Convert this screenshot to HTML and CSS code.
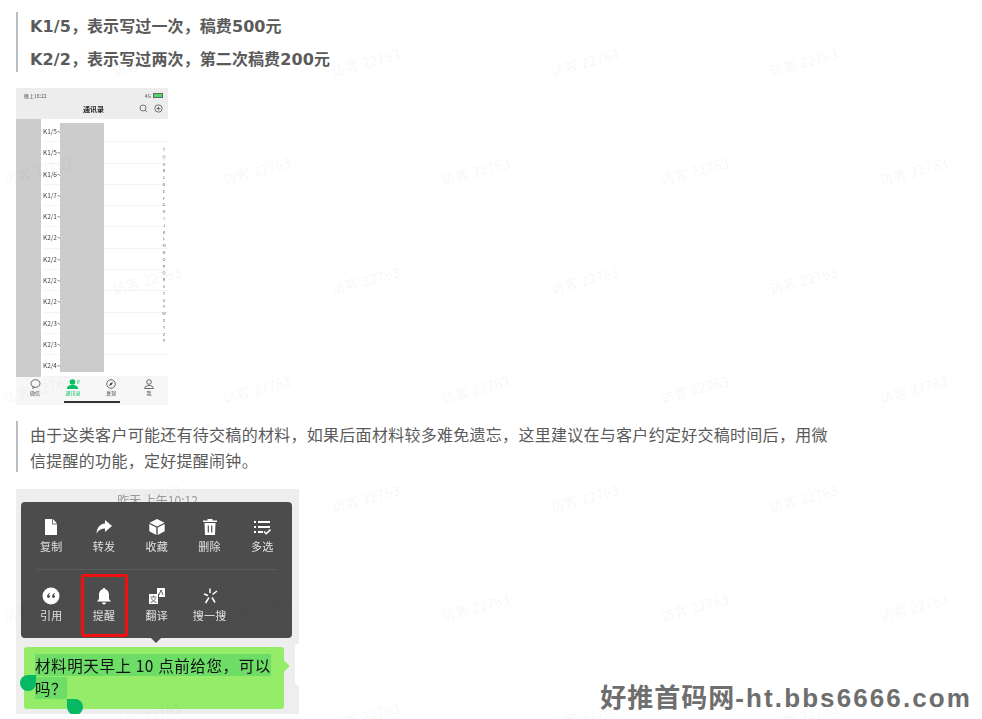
FILE: index.html
```html
<!DOCTYPE html>
<html lang="zh-CN">
<head>
    <meta charset="UTF-8">
    <meta name="viewport" content="width=device-width, initial-scale=1.0">
    <title>好推首码网</title>
    <link rel="stylesheet" href="styles.css">
</head>
<body>
    <main class="article">
        <blockquote class="quote quote-bold">
            <p>K1/5，表示写过一次，稿费500元</p>
            <p>K2/2，表示写过两次，第二次稿费200元</p>
        </blockquote>

        <!-- 通讯录截图 -->
        <div class="phone">
            <div class="phone-head">
                <div class="status">
                    <span>晚上18:22</span>
                    <span class="status-right">4G <i class="battery"></i></span>
                </div>
                <div class="phone-title">
                    <b>通讯录</b>
                    <span class="phone-tools">
                        <svg width="9" height="9" viewBox="0 0 9 9"><circle cx="4" cy="4" r="3" fill="none" stroke="#555" stroke-width=".8"/><path d="M6.2 6.2 8 8" stroke="#555" stroke-width=".8"/></svg>
                        <svg width="9" height="9" viewBox="0 0 9 9"><circle cx="4.5" cy="4.5" r="3.7" fill="none" stroke="#555" stroke-width=".8"/><path d="M4.5 2.5v4M2.5 4.5h4" stroke="#555" stroke-width=".8"/></svg>
                    </span>
                </div>
            </div>
            <div class="phone-body">
                <ul class="contacts">
                    <li>K1/5~</li>
                    <li>K1/5~</li>
                    <li>K1/6~</li>
                    <li>K1/7~</li>
                    <li>K2/1~</li>
                    <li>K2/2~</li>
                    <li>K2/2~</li>
                    <li>K2/2~</li>
                    <li>K2/2~</li>
                    <li>K2/3~</li>
                    <li>K2/3~</li>
                    <li>K2/4~</li>
                </ul>
                <div class="letters">↑<br>☆<br>A<br>B<br>C<br>D<br>E<br>F<br>G<br>H<br>I<br>J<br>K<br>L<br>M<br>N<br>O<br>P<br>Q<br>R<br>S<br>T<br>U<br>V<br>W<br>X<br>Y<br>Z<br>#</div>
                <div class="mask mask-a"></div>
                <div class="mask mask-b"></div>
            </div>
            <div class="tabs">
                <div class="tab">
                    <svg width="11" height="10" viewBox="0 0 11 10"><ellipse cx="5.5" cy="4.5" rx="4.5" ry="3.8" fill="none" stroke="#444" stroke-width=".8"/><path d="M3 7.5 2.6 9.5 5 8.2" fill="none" stroke="#444" stroke-width=".6"/></svg>
                    <span>微信</span>
                </div>
                <div class="tab tab-on">
                    <svg width="13" height="10" viewBox="0 0 13 10"><circle cx="5.5" cy="3" r="2.8" fill="#07c160"/><path d="M0 10c0-3 2-4 5.500-4S11 7 11 10Z" fill="#07c160"/><path d="M10 2h3M10 4h2" stroke="#07c160" stroke-width=".8"/></svg>
                    <span>通讯录</span>
                </div>
                <div class="tab">
                    <svg width="10" height="10" viewBox="0 0 10 10"><circle cx="5" cy="5" r="4.300" fill="none" stroke="#444" stroke-width=".8"/><path d="M7 3 4.200 4.200 3 7l2.800-1.200Z" fill="#444"/></svg>
                    <span>发现</span>
                </div>
                <div class="tab">
                    <svg width="10" height="10" viewBox="0 0 10 10"><circle cx="5" cy="3" r="2.300" fill="none" stroke="#444" stroke-width=".8"/><path d="M.6 9.500c0-2 2-3 4.400-3s4.400 1 4.400 3Z" fill="none" stroke="#444" stroke-width=".8"/></svg>
                    <span>我</span>
                </div>
                <i class="home-bar"></i>
            </div>
        </div>

        <blockquote class="quote quote-plain">
            <p>由于这类客户可能还有待交稿的材料，如果后面材料较多难免遗忘，这里建议在与客户约定好交稿时间后，用微信提醒的功能，定好提醒闹钟。</p>
        </blockquote>

        <!-- 微信长按菜单截图 -->
        <div class="chat">
            <div class="chat-time">昨天 上午10:12</div>
            <div class="bubble">
                <span class="picked">材料明天早上 10 点前给您，可以</span><br>
                <span class="picked">吗？</span>
            </div>
            <i class="next-bubble"></i>
            <i class="handle handle-start"></i>
            <i class="handle handle-end"></i>

            <div class="menu">
                <div class="menu-row">
                    <div class="menu-item">
                        <svg width="18" height="18" viewBox="0 0 18 18"><path d="M3 1h8l4 4.500V17H3Z" fill="#fff"/><path d="M10.500 1v5H15" fill="none" stroke="#4c4c4c" stroke-width=".8"/></svg>
                        <span>复制</span>
                    </div>
                    <div class="menu-item">
                        <svg width="18" height="18" viewBox="0 0 18 18"><path d="M10 2l7 6-7 6v-3.500c-4 0-6.500 1.500-8.500 5C2 10 4.500 6 10 5.500Z" fill="#fff"/></svg>
                        <span>转发</span>
                    </div>
                    <div class="menu-item">
                        <svg width="18" height="18" viewBox="0 0 18 18"><path d="M9 1l7.500 3.800L9 8.500 1.500 4.800Z" fill="#fff"/><path d="M1.300 6l7 3.600V17l-7-3.800ZM16.700 6l-7 3.600V17l7-3.800Z" fill="#fff"/></svg>
                        <span>收藏</span>
                    </div>
                    <div class="menu-item">
                        <svg width="18" height="18" viewBox="0 0 18 18"><path d="M6.500 1h5v1.500H16V4H2V2.500h4.500ZM3.500 5h11L14 17H4Z" fill="#fff"/><path d="M7.300 7.500v7M10.700 7.500v7" stroke="#4c4c4c" stroke-width="1.200"/></svg>
                        <span>删除</span>
                    </div>
                    <div class="menu-item">
                        <svg width="18" height="18" viewBox="0 0 18 18"><path d="M1 4h2M5 4h12M1 9h2M5 9h12M1 14h2M5 14h5" stroke="#fff" stroke-width="1.800" fill="none"/><path d="M11 13.500l2.200 2.200L17.500 11.500" stroke="#fff" stroke-width="1.600" fill="none"/></svg>
                        <span>多选</span>
                    </div>
                </div>
                <hr class="menu-line">
                <div class="menu-row menu-row-last">
                    <div class="menu-item">
                        <svg width="18" height="18" viewBox="0 0 18 18"><circle cx="9" cy="9" r="8.500" fill="#fff"/><path d="M8 6C6 6.500 5 8 5 9.500a1.500 1.500 0 1 0 1.700-1.500c.2-.6.700-1.100 1.300-1.300ZM13 6c-2 .5-3 2-3 3.500a1.500 1.500 0 1 0 1.700-1.500c.2-.6.700-1.100 1.300-1.300Z" fill="#4c4c4c"/></svg>
                        <span>引用</span>
                    </div>
                    <div class="menu-item">
                        <svg width="18" height="18" viewBox="0 0 18 18"><path d="M9 1c.8 0 1.300.5 1.400 1.300C13 3 14 5.500 14 8v4l2 2.500H2L4 12V8c0-2.500 1-5 3.600-5.700C7.700 1.500 8.200 1 9 1Z" fill="#fff"/><path d="M7 15.500h4a2 2 0 0 1-4 0Z" fill="#fff"/></svg>
                        <span>提醒</span>
                    </div>
                    <div class="menu-item">
                        <svg width="18" height="18" viewBox="0 0 18 18"><path d="M9 1h8v9H11V7H9Z" fill="#fff"/><path d="M11 8l2-5 2 5" fill="none" stroke="#4c4c4c" stroke-width=".9"/><rect x="1" y="7" width="9" height="10" fill="#fff"/><path d="M2.500 10h6M5.500 8.500V10M3.500 11c.5 2 2.500 4 5 4.500M7.500 11c-.5 2-2.500 4-5 4.500" fill="none" stroke="#4c4c4c" stroke-width=".8"/></svg>
                        <span>翻译</span>
                    </div>
                    <div class="menu-item">
                        <svg width="18" height="18" viewBox="0 0 18 18"><path d="M9 1.500v4.500M16 4l-4.500 3.500M3 7l4 1.500M8 10.500 4.500 16M11 10.500l3 5" stroke="#fff" stroke-width="1.500" fill="none"/></svg>
                        <span>搜一搜</span>
                    </div>
                </div>
                <div class="picked-frame"></div>
                <i class="menu-arrow"></i>
            </div>
        </div>
    </main>

    <!-- 访客水印 -->
    <div class="watermarks">
        <div class="wm-row"><span>访客 22763</span><span>访客 22763</span><span>访客 22763</span><span>访客 22763</span></div>
        <div class="wm-row wm-row-shift"><span>访客 22763</span><span>访客 22763</span><span>访客 22763</span><span>访客 22763</span><span>访客 22763</span></div>
        <div class="wm-row"><span>访客 22763</span><span>访客 22763</span><span>访客 22763</span><span>访客 22763</span></div>
        <div class="wm-row wm-row-shift"><span>访客 22763</span><span>访客 22763</span><span>访客 22763</span><span>访客 22763</span><span>访客 22763</span></div>
        <div class="wm-row"><span>访客 22763</span><span>访客 22763</span><span>访客 22763</span><span>访客 22763</span></div>
        <div class="wm-row wm-row-shift"><span>访客 22763</span><span>访客 22763</span><span>访客 22763</span><span>访客 22763</span><span>访客 22763</span></div>
        <div class="wm-row"><span>访客 22763</span><span>访客 22763</span><span>访客 22763</span><span>访客 22763</span></div>
    </div>

    <div class="site-mark">好推首码网<span class="site-url">-ht.bbs6666.com</span></div>
</body>
</html>
```

FILE: styles.css
```css
html, body {
    margin: 0;
    padding: 0;
    height: 100%;
    overflow: hidden;
}

body {
    position: relative;
    background: #fff;
    color: #5a5a5a;
    font-family: "Noto Sans CJK SC", "Liberation Sans", sans-serif;
}

.article {
    padding: 12px 0 0 16px;
}

.quote {
    margin: 0;
    padding-left: 12px;
    border-left: 2px solid #bcbfc2;
    font-size: 16px;
}

.quote p {
    margin: 0;
}

.quote-bold {
    width: 800px;
    height: 60px;
    font-family: "DejaVu Sans", "Noto Sans CJK SC", sans-serif;
    font-weight: bold;
    line-height: 33px;
    letter-spacing: .1px;
}

.quote-bold p {
    height: 33px;
    position: relative;
    top: -2px;
}

.quote-plain {
    width: 800px;
    height: 51px;
    margin-top: 16px;
    line-height: 26px;
    letter-spacing: .28px;
}

/* phone screenshot */
.phone {
    display: flex;
    flex-direction: column;
    width: 152px;
    height: 317px;
    margin-top: 16px;
    background: #fff;
    font-size: 7px;
    filter: blur(.4px);
}

.phone-head {
    height: 31px;
    background: #ededed;
    padding: 3px 5px 0 8px;
    box-sizing: border-box;
}

.status {
    display: flex;
    justify-content: space-between;
    align-items: center;
    height: 8px;
    font-size: 5px;
    color: #555;
}

.status-right {
    display: flex;
    align-items: center;
    gap: 2px;
}

.battery {
    display: block;
    width: 8px;
    height: 3px;
    background: #4cd964;
    border: .5px solid #666;
}

.phone-title {
    position: relative;
    margin-top: 4px;
    text-align: center;
    font-size: 7px;
    line-height: 12px;
    color: #222;
}

.phone-tools {
    position: absolute;
    right: 0;
    top: 1px;
    display: flex;
    gap: 6px;
}

.phone-body {
    position: relative;
    flex: 1;
    overflow: hidden;
}

.contacts {
    list-style: none;
    margin: 0;
    padding: 2px 0 0 27px;
}

.contacts li {
    height: 21.3px;
    line-height: 21.3px;
    font-size: 6.5px;
    color: #444;
    border-bottom: 1px solid #f4f4f4;
    box-sizing: border-box;
}

.letters {
    position: absolute;
    right: 1px;
    top: 28px;
    width: 6px;
    text-align: center;
    font-size: 4px;
    line-height: 6.8px;
    color: #666;
}

.mask {
    position: absolute;
    background: #ccc;
}

.mask-a {
    left: 0;
    top: 0;
    bottom: 0;
    width: 25px;
}

.mask-b {
    left: 44px;
    top: 4px;
    bottom: 5px;
    width: 44px;
}

.tabs {
    position: relative;
    display: flex;
    height: 28px;
    background: #f7f7f7;
}

.tab {
    flex: 1;
    display: flex;
    flex-direction: column;
    align-items: center;
    padding-top: 2px;
    font-size: 5px;
    line-height: 7px;
    color: #444;
}

.tab-on {
    color: #07c160;
}

.home-bar {
    position: absolute;
    left: 48px;
    bottom: 2px;
    width: 56px;
    height: 2px;
    background: #333;
}

/* chat screenshot */
.chat {
    position: relative;
    width: 283px;
    height: 225px;
    margin-top: 17px;
    background: #eee;
    overflow: hidden;
    filter: blur(.3px);
}

.chat-time {
    padding-top: 4px;
    text-align: center;
    font-size: 12px;
    line-height: 14px;
    color: #999;
}

.bubble {
    position: absolute;
    left: 8px;
    top: 158px;
    width: 240px;
    height: 55px;
    padding: 7px 9px 0 11px;
    background: #95ec69;
    border-radius: 3px;
    font-size: 15.5px;
    line-height: 23px;
    letter-spacing: .6px;
    white-space: nowrap;
    color: #111;
}

.bubble::after {
    content: "";
    position: absolute;
    right: -4px;
    top: 15px;
    width: 8px;
    height: 8px;
    background: #95ec69;
    transform: rotate(45deg);
}

.picked {
    background: #6ddd68;
}

.next-bubble {
    position: absolute;
    right: -10px;
    top: 155px;
    width: 14px;
    height: 41px;
    background: #fff;
    border-radius: 3px;
}

.handle {
    position: absolute;
    width: 16px;
    height: 16px;
    background: #07b863;
}

.handle-start {
    left: 4px;
    top: 186px;
    border-radius: 50% 0 50% 50%;
}

.handle-end {
    left: 51px;
    top: 210px;
    border-radius: 0 50% 50% 50%;
}

.menu {
    position: absolute;
    left: 5px;
    top: 13px;
    width: 271px;
    height: 136px;
    background: #4c4c4c;
    border-radius: 4px;
}

.menu-row {
    display: flex;
    height: 67px;
    padding: 16px 0 0 4px;
    box-sizing: border-box;
}

.menu-row-last {
    padding-top: 17px;
}

.menu-line {
    height: 1px;
    margin: 0 15px;
    border: 0;
    background: #5a5a5a;
}

.menu-item {
    display: flex;
    flex-direction: column;
    align-items: center;
    gap: 3px;
    width: 52.75px;
    font-size: 11px;
    line-height: 14px;
    letter-spacing: .3px;
    color: #e0e0e0;
}

.picked-frame {
    position: absolute;
    left: 60px;
    top: 72px;
    width: 47px;
    height: 63px;
    box-sizing: border-box;
    border: 3px solid #f01010;
    border-radius: 3px;
}

.menu-arrow {
    position: absolute;
    left: 130px;
    bottom: -5px;
    border-left: 5px solid transparent;
    border-right: 5px solid transparent;
    border-top: 5px solid #4c4c4c;
}

/* watermark layer */
.watermarks {
    position: absolute;
    left: 0;
    top: 0;
    right: 0;
    bottom: 0;
    padding-top: 8px;
    overflow: hidden;
    pointer-events: none;
}

.wm-row {
    display: flex;
    flex: none;
    height: 109px;
    padding-left: 37px;
}

.wm-row-shift {
    padding-left: 0;
    margin-left: -72px;
}

.wm-row span {
    flex: 0 0 219px;
    text-align: center;
    font-size: 14px;
    line-height: 109px;
    color: rgba(0, 0, 0, .05);
    transform: rotate(-15deg);
}

.site-mark {
    position: absolute;
    right: 10px;
    top: 680px;
    font-family: "Liberation Sans", "Noto Sans CJK SC", sans-serif;
    font-weight: bold;
    font-size: 26px;
    line-height: 36px;
    letter-spacing: 1px;
    color: #6e6e6e;
    white-space: nowrap;
}

.site-url {
    letter-spacing: 2.1px;
}
```
